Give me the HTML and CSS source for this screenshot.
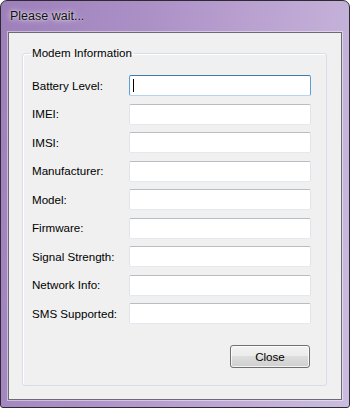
FILE: index.html
```html
<!DOCTYPE html>
<html lang="en">
<head>
    <meta charset="UTF-8">
    <title>Please wait...</title>
    <link rel="stylesheet" href="styles.css">
</head>
<body>
    <div class="window">
        <div class="titlebar">Please wait...</div>
        <div class="client">
            <fieldset class="group">
                <legend>Modem Information</legend>
                <div class="rows">
                    <label>Battery Level:</label>
                    <div class="field focus"><span class="caret"></span></div>
                    <label>IMEI:</label>
                    <div class="field"></div>
                    <label>IMSI:</label>
                    <div class="field"></div>
                    <label>Manufacturer:</label>
                    <div class="field"></div>
                    <label>Model:</label>
                    <div class="field"></div>
                    <label>Firmware:</label>
                    <div class="field"></div>
                    <label>Signal Strength:</label>
                    <div class="field"></div>
                    <label>Network Info:</label>
                    <div class="field"></div>
                    <label>SMS Supported:</label>
                    <div class="field"></div>
                </div>
                <div class="actions">
                    <button class="btn">Close</button>
                </div>
            </fieldset>
        </div>
    </div>
</body>
</html>
```

FILE: styles.css
```css
html, body {
    margin: 0;
    padding: 0;
}
body {
    width: 350px;
    height: 408px;
    overflow: hidden;
    font-family: "Liberation Sans", Arial, sans-serif;
    font-size: 11.6px;
    color: #000;
}
.window {
    box-sizing: border-box;
    width: 350px;
    height: 408px;
    border: 1px solid #2e2a33;
    border-radius: 7px 7px 3px 3px;
    background: linear-gradient(100deg, #9d7fba 0%, #ab90c6 35%, #bca4d2 65%, #cbbddf 100%);
    padding: 0 7px 7px 7px;
    display: flex;
    flex-direction: column;
}
.titlebar {
    height: 31px;
    display: flex;
    align-items: center;
    padding-left: 2px;
    padding-bottom: 1px;
    box-sizing: border-box;
    font-size: 12.5px;
    color: #111;
    text-shadow: 0 0 6px rgba(255, 255, 255, 0.9), 0 0 2px rgba(255, 255, 255, 0.7);
}
.client {
    flex: 1;
    box-sizing: border-box;
    background-color: #f0f0f0;
    border: 1px solid #6d6a75;
    box-shadow: 0 0 0 1px rgba(255, 255, 255, 0.45);
    padding: 13px 14px 13px 13px;
    display: flex;
    flex-direction: column;
}
.group {
    flex: 1;
    margin: 0;
    border: 1px solid #d5dfe5;
    border-radius: 3px;
    box-shadow: inset 1px 1px 0 #fff;
    padding: 15px 15px 0 7px;
    display: flex;
    flex-direction: column;
    min-width: 0;
}
.group legend {
    padding: 0 2px;
    line-height: 14px;
}
.rows {
    display: grid;
    grid-template-columns: 97px 182px;
    row-gap: 7.5px;
    margin-left: 2px;
}
.rows label {
    display: flex;
    align-items: center;
    padding-bottom: 1px;
}
.field {
    height: 21px;
    box-sizing: border-box;
    background-color: #fff;
    border: 1px solid #e2e3ea;
    border-top-color: #b9bcc2;
    border-bottom-color: #e3e9ef;
    border-radius: 2px;
    position: relative;
}
.field.focus {
    border-color: #5c9fd8;
    border-bottom-color: #b5d3ee;
    border-top-color: #3d7bad;
}
.caret {
    position: absolute;
    left: 3px;
    top: 3px;
    width: 1px;
    height: 13px;
    background-color: #000;
}
.actions {
    display: flex;
    justify-content: flex-end;
    margin-top: 21px;
    margin-left: 2px;
    width: 279px;
}
.btn {
    width: 80px;
    height: 23px;
    margin-right: 1px;
    font-family: "Liberation Sans", Arial, sans-serif;
    font-size: 11.6px;
    color: #000;
    border: 1px solid #707070;
    border-radius: 3px;
    background: linear-gradient(#f2f2f2 0%, #ebebeb 49%, #dddddd 50%, #cfcfcf 100%);
    box-shadow: inset 0 0 0 1px rgba(255, 255, 255, 0.75);
    padding: 0 0 1px;
}
```
